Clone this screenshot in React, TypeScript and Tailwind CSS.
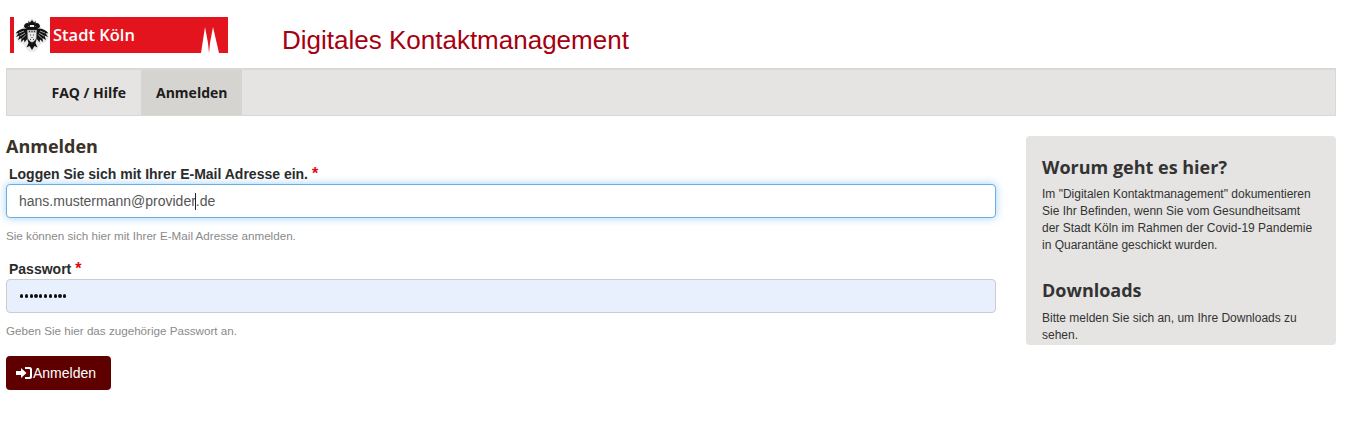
function Eagle() {
  return (
    <svg viewBox="0 0 34 34" className="w-[34px] h-[34px] ml-px">
      {/* grey halo behind the bird */}
      <path d="M17 0l5 4 3 2 1 4 6 3 2 6-3 5-5 2-3 3-2 4-4 1-4-1-2-4-3-3-5-2-3-5 2-6 6-3 1-4 3-2z" fill="#d8d8d8" opacity="0.55" />
      {/* crown and heads */}
      <path d="M13 3l2 1.500L17 2l2 2.500L21 3l-1 4h-6z" fill="#111" />
      <path d="M9 9c0-2.500 1.500-4 3.500-4S15 6.500 15 9l-2-.5-1 2.500zM25 9c0-2.500-1.500-4-3.500-4S19 6.500 19 9l2-.5 1 2.500z" fill="#111" />
      {/* wings */}
      <path d="M12 10.500C8 10 3 11.500.500 15.500l3-.5L1 19l3.500-1.500L3 22l3.500-2L6 24l3-2.500.500 3 3-4z" fill="#111" />
      <path d="M22 10.500c4-.5 9 1 11.500 5l-3-.5L33 19l-3.500-1.500L31 22l-3.500-2 .5 4-3-2.500-.5 3-3-4z" fill="#111" />
      {/* feather gaps */}
      <path d="M4 15l5-2M5 18l5-3M7 20.500l4-4M30 15l-5-2M29 18l-5-3M27 20.500l-4-4" stroke="#fff" strokeWidth="0.6" fill="none" />
      {/* body and tail */}
      <path d="M12 9h10v11l-1.500 5 2 4.500-3-1.500-2.500 4-2.500-4-3 1.500 2-4.500L12 20z" fill="#111" />
      {/* shield */}
      <path d="M12.500 12h9v7c0 3-2.500 4.500-4.500 5.500-2-1-4.500-2.500-4.500-5.500z" fill="#e8e8e8" stroke="#555" strokeWidth="0.5" />
      <rect x="12.500" y="12" width="9" height="3" fill="#bdbdbd" />
      <path d="M14 12.800h1v1.200h-1zM16.500 12.800h1v1.200h-1zM19 12.800h1v1.200h-1zM15 16.500h1v1h-1zM18 16.500h1v1h-1zM16.500 19h1v1h-1zM15 21h1v1h-1zM18 21h1v1h-1z" fill="#333" />
    </svg>
  );
}

function Towers() {
  return (
    <svg viewBox="0 0 18 26" className="w-[18px] h-[26px] absolute right-[9px] bottom-0">
      <path d="M0 26L4 0l3 16 1 10zM8 26l1-10 3-16 6 26z" fill="#fff" />
    </svg>
  );
}

function Logo() {
  return (
    <div className="flex items-stretch h-[36px] w-[218px]">
      <div className="w-[4px] bg-[#e3141e]" />
      <div className="w-[36px] flex items-center">
        <Eagle />
      </div>
      <div className="relative flex-1 bg-[#e3141e] flex items-center pl-[3px]">
        <span className="font-['Open_Sans',sans-serif] font-semibold text-[16.5px] text-white">Stadt Köln</span>
        <Towers />
      </div>
    </div>
  );
}

function Req() {
  return <span className="text-[#e30613] text-[16px]">*</span>;
}

export default function App() {
  const nav = ["FAQ / Hilfe", "Anmelden"];
  return (
    <div className="min-h-[426px] bg-white font-['Liberation_Sans',Arial,sans-serif] text-[#333] overflow-hidden">
      <header className="flex items-end h-[68px] pl-[10px] pb-[13px]">
        <div className="mb-[2px]"><Logo /></div>
        <h1 className="ml-[54px] text-[26px] leading-[30px] text-[#a5000f]">Digitales Kontaktmanagement</h1>
      </header>

      <nav className="mx-[6px] w-[1330px] h-[48px] bg-[#e5e4e2] border border-[#d8d8d6] border-t-2 flex pl-[29.500px]">
        {nav.map((item, i) => (
          <a
            key={item}
            className={`px-[15px] h-full flex items-center font-['Open_Sans',sans-serif] font-bold text-[14px] text-[#1c1c1c] ${i === 1 ? "bg-[#d5d4d1]" : ""}`}
          >
            {item}
          </a>
        ))}
      </nav>

      <div className="flex pl-[6px] pt-[20px]">
        <main className="w-[990px]">
          <h2 className="font-['Open_Sans',sans-serif] font-bold text-[18px] leading-[20px] text-[#3a3228]">Anmelden</h2>

          <label className="block mt-[9px] pl-[3px] font-bold text-[14px] leading-[17px] text-[#2b2b2b]">
            Loggen Sie sich mit Ihrer E-Mail Adresse ein. <Req />
          </label>
          <div className="mt-px h-[34px] rounded-[4px] border border-[#66afe9] bg-white shadow-[0_0_8px_rgba(102,175,233,0.6)] flex items-center pl-[12px] text-[14px] text-[#555]">
            <span>hans.mustermann@provider</span>
            <span className="w-px h-[17px] bg-[#222] -ml-px" />
            <span>.de</span>
          </div>
          <p className="mt-[11px] text-[11.650px] leading-[14px] text-[#8a8a8a]">Sie können sich hier mit Ihrer E-Mail Adresse anmelden.</p>

          <label className="block mt-[17px] pl-[3px] font-bold text-[14px] leading-[17px] text-[#2b2b2b]">
            Passwort <Req />
          </label>
          <div className="mt-px h-[34px] rounded-[4px] border border-[#ccc] bg-[#e8f0fe] flex items-center pl-[13px] gap-[1.500px]">
            {Array.from({ length: 10 }).map((_, i) => (
              <span key={i} className="w-[3.300px] h-[3.300px] rounded-full bg-[#111]" />
            ))}
          </div>
          <p className="mt-[11px] text-[11.650px] leading-[14px] text-[#8a8a8a]">Geben Sie hier das zugehörige Passwort an.</p>

          <button className="mt-[18px] w-[105px] h-[34px] rounded-[4px] bg-[#5f0000] text-white text-[14px] flex items-center pl-[10px]">
            <svg viewBox="0 0 17 14" className="w-[17px] h-[14px]" fill="#fff">
              <path d="M0 5h5V2l5.500 5L5 12V9H0z" />
              <path d="M9 1h4.500A2.500 2.500 0 0 1 16 3.500v7a2.500 2.500 0 0 1-2.500 2.500H9v-2h4a1 1 0 0 0 1-1V4a1 1 0 0 0-1-1H9z" />
            </svg>
            <span>Anmelden</span>
          </button>
        </main>

        <aside className="ml-[30px] w-[310px] h-[209px] rounded-[4px] bg-[#e5e4e2] px-[16px] pt-[19px] overflow-hidden">
          <h3 className="font-['Open_Sans',sans-serif] font-bold text-[18px] leading-[24px] text-[#333]">Worum geht es hier?</h3>
          <p className="mt-[7px] text-[12px] leading-[17px] text-[#333]">
            Im "Digitalen Kontaktmanagement" dokumentieren Sie Ihr Befinden, wenn Sie vom Gesundheitsamt der Stadt Köln im Rahmen der Covid-19 Pandemie in Quarantäne geschickt wurden.
          </p>
          <h3 className="mt-[24px] font-['Open_Sans',sans-serif] font-bold text-[18px] leading-[24px] text-[#333]">Downloads</h3>
          <p className="mt-[8px] text-[12px] leading-[17px] text-[#333]">
            Bitte melden Sie sich an, um Ihre Downloads zu sehen.
          </p>
        </aside>
      </div>
    </div>
  );
}
